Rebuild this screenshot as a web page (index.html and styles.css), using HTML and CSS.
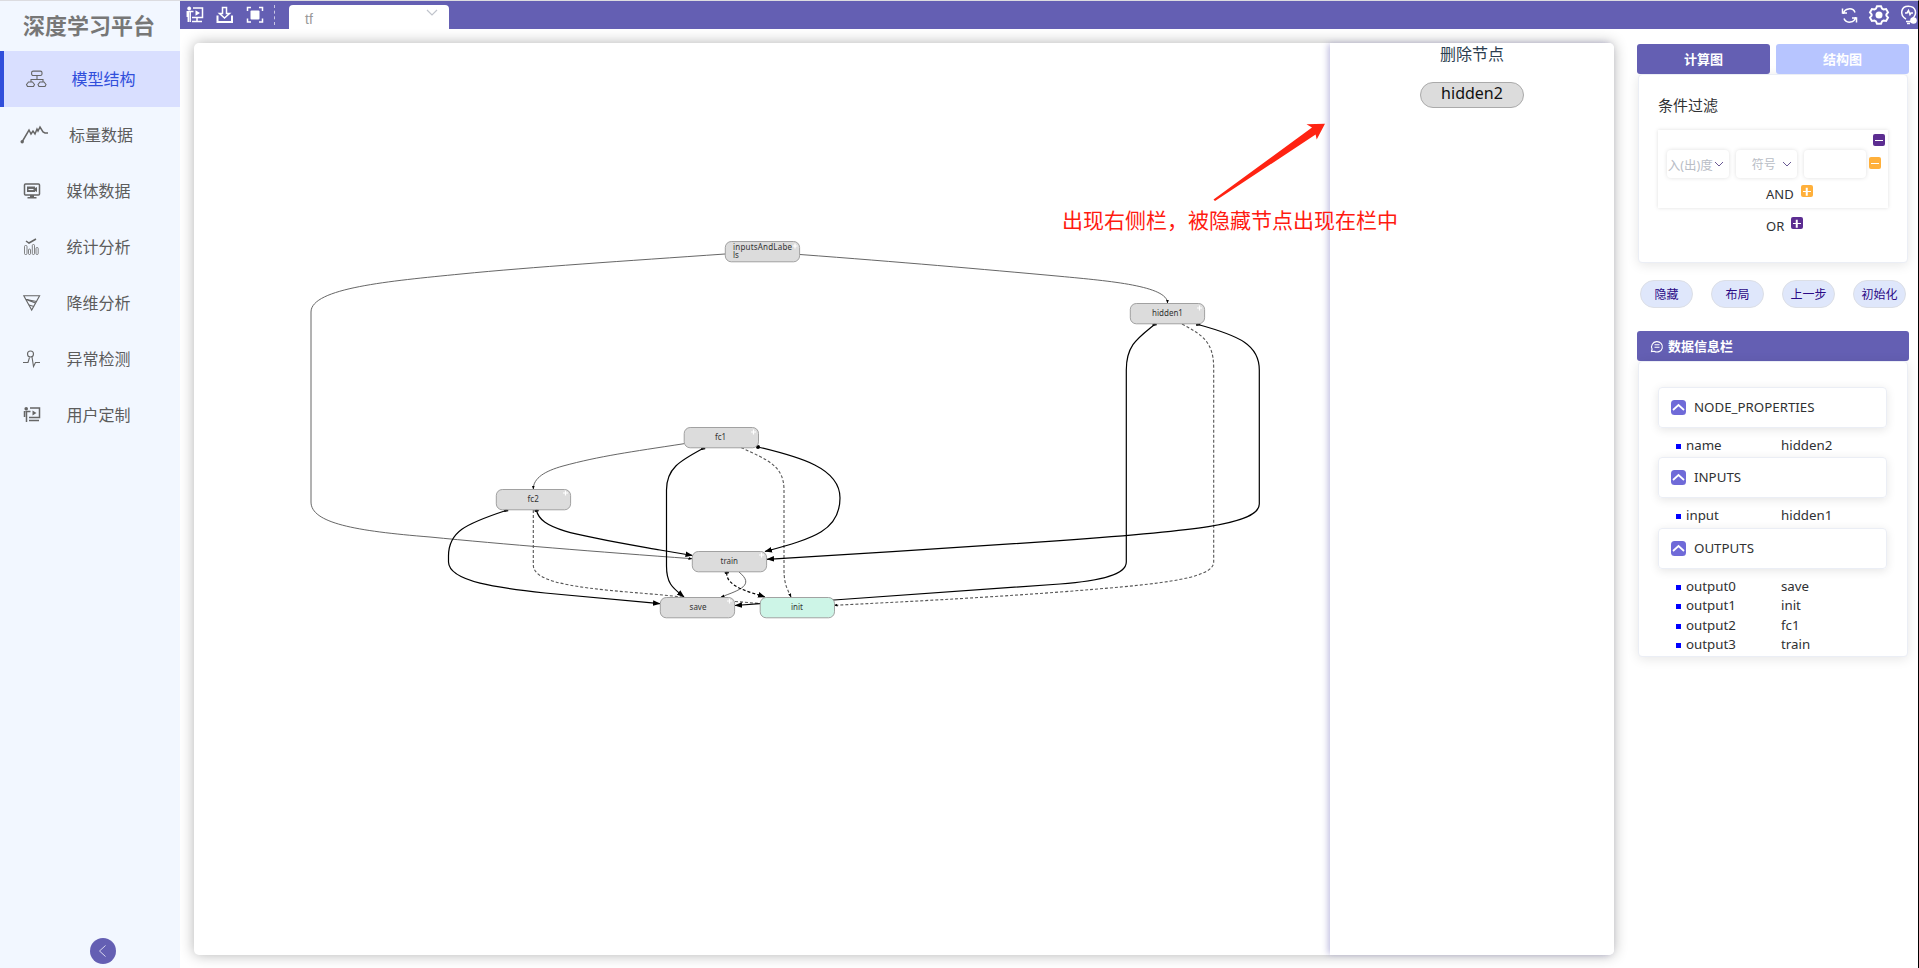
FILE: index.html
```html
<!DOCTYPE html>
<html lang="zh-CN">
<head>
<meta charset="utf-8">
<title>深度学习平台</title>
<link rel="stylesheet" href="styles.css">
</head>
<body>
<div class="app">
  <aside class="sidebar">
    <h1 class="brand">深度学习平台</h1>
    <nav class="menu">
      <a class="item active"><svg class="ico wide" width="22" height="18" viewBox="0 0 22 18"><rect x="5.600" y="1.100" width="10.400" height="4.400" rx="1.600"/><path d="M11 6v3.500M5 12V9.500h12V12"/><path d="M2.500 12h4l2 2.500-1 2h-6l-1-2zM14 12h4l2 2.500-1 2h-6l-1-2z"/></svg><span>模型结构</span></a>
      <a class="item second"><svg class="ico" width="28" height="18" viewBox="0 0 28 18"><path class="bold" d="M2 16L9 4l2 4 2-3 2 3 2-5 1 2 2-4 3 5 2 1h3"/><circle class="fill" cx="2.200" cy="15.700" r="1.700"/></svg><span>标量数据</span></a>
      <a class="item"><svg class="ico" width="18" height="18" viewBox="0 0 18 18"><rect class="bold" x="1.500" y="2" width="15" height="11" rx="1"/><path class="fill" d="M4 4.500h8V6l2-1v5l-2-1v1H4z"/><path class="line-light" d="M5.500 7.500h5"/><path class="fill" d="M7 13h4v2h2.500v1.500h-9V15H7z"/></svg><span>媒体数据</span></a>
      <a class="item"><svg class="ico" width="18" height="18" viewBox="0 0 18 18"><path class="bold" d="M3 3l3 2 7-4"/><g class="bars"><rect x="1.500" y="7.500" width="2.500" height="9" rx="1"/><rect x="5.500" y="11" width="2" height="5.500" rx="1"/><rect x="9.300" y="6.500" width="2.200" height="10" rx="1"/><rect x="13" y="9.500" width="2.200" height="7" rx="1"/></g></svg><span>统计分析</span></a>
      <a class="item"><svg class="ico" width="18" height="18" viewBox="0 0 18 18"><path d="M.8 1.700h15.800L8.700 16z"/><path d="M3.500 5.500l10 2M3 5.500L12.500 9M6 11l5 1.500"/></svg><span>降维分析</span></a>
      <a class="item"><svg class="ico" width="18" height="18" viewBox="0 0 18 18"><circle cx="7.500" cy="4" r="3"/><path d="M0 12.500h5l1.500-5M9 7l1.500 9.500 2-4H17"/></svg><span>异常检测</span></a>
      <a class="item"><svg class="ico" width="18" height="18" viewBox="0 0 18 18"><circle class="fill" cx="3.200" cy="2.800" r="1.800"/><path class="bold" d="M1.500 5v6M3.500 5v11M2.500 5.500h5M7 2h9.500v9.500H6M6 14.500h10"/><path class="fill" d="M9.500 4.500l4 2.500-4 2.500z"/></svg><span>用户定制</span></a>
    </nav>
    <button class="collapse"><svg width="10" height="14" viewBox="0 0 10 14"><path d="M7.500 1.500L1.500 7l6 5.500"/></svg></button>
  </aside>

  <div class="content">
    <header class="topbar">
      <div class="tools">
        <svg width="18" height="18" viewBox="0 0 18 18"><circle class="fill" cx="3.200" cy="2.500" r="1.900"/><path d="M1.300 5v6M2.300 5v11M4.200 5v11M2.500 5.500h5M7 2h9.500v9.500H6M6 15.500h10M11 12v3"/><path class="fill" d="M9.500 4.300l4.500 2.700-4.500 2.700z"/></svg>
        <svg width="18" height="18" viewBox="0 0 18 18"><path d="M6.500 1.500h4v6h3L8.500 12l-5-4.500h3z"/><path class="heavy" d="M1.500 9.500v6.500h14.500V9.500"/></svg>
        <svg width="18" height="18" viewBox="0 0 18 18"><path d="M1.500 5V1.500H5M13 1.500h3.500V5M16.500 12.500V16H13M5 16H1.500v-3.500"/><rect class="fill" x="4.500" y="4.500" width="9" height="9" rx="1"/></svg>
      </div>
      <span class="sep"></span>
      <div class="select-tab"><span>tf</span><svg width="12" height="8" viewBox="0 0 12 8"><path d="M1 1l5 5 5-5"/></svg></div>
      <div class="actions">
        <svg width="17" height="17" viewBox="0 0 17 17"><path d="M2.500 7C3 1 12 0 14 5.500M14.500 10C14 16 5 17 3 11.500M1.500 1.500V6H6M15.500 15.500V11H11"/></svg>
        <svg width="20" height="20" viewBox="0 0 20 20"><path class="heavy" d="M8 1.200h4l1 2.400 1.500.8 2.600-.4 1.900 3.300-1.600 2v1.400l1.600 2-1.900 3.300-2.600-.4-1.500.8-1 2.400H8l-1-2.400-1.500-.8-2.600.4L1 12.700l1.600-2V9.300L1 7.300 2.900 4l2.600.4L7 3.600z"/><circle class="fill" cx="10" cy="10" r="3.500"/></svg>
        <svg width="18" height="20" viewBox="0 0 18 20"><path d="M6 14C-1 10 1 1 8.500 1.200S18 9 12 14M5 8h2l1.500-2.500L10 9.500l1-1.500h2M6 16.500h5M7 18.500h3"/><circle class="fill" cx="13.500" cy="15.500" r="3.300"/></svg>
      </div>
    </header>

    <main class="main">
      <section class="stage">
        <svg class="graph" width="1420" height="912" viewBox="194 43 1420 912">
          <defs>
            <marker id="big" viewBox="0 0 8 6" refX="7.500" refY="3" markerUnits="userSpaceOnUse" markerWidth="7.500" markerHeight="6" orient="auto-start-reverse"><path d="M0 0L8 3 0 6z"/></marker>
            <marker id="mini" viewBox="0 0 8 6" refX="7" refY="3" markerUnits="userSpaceOnUse" markerWidth="4" markerHeight="3.500" orient="auto-start-reverse"><path d="M0 0L8 3 0 6z"/></marker>
            <marker id="foot" viewBox="0 0 6 4" refX="3" refY="2" markerUnits="userSpaceOnUse" markerWidth="5" markerHeight="3"><path d="M0 2L3 0 6 1 6 3 1 4z"/></marker>
          </defs>
          <g class="thin">
            <path d="M725 254C625 261 532 267 461 274C390 281 311 288 311 312V502C311 523 355 531 430 537C500 544 600 552 692 558.700" marker-end="url(#mini)"/>
            <path d="M800 254.500C900 262 980 269 1060 276.300C1110 281 1167.500 286 1167.500 303" marker-end="url(#mini)"/>
            <path d="M684 443.700C630 452 600 456 563 466C545 471 533.300 478 533.300 489" marker-end="url(#mini)"/>
            <path d="M739 572C755 585 740 590 721 597" marker-end="url(#mini)"/>
          </g>
          <g class="thin dashed">
            <path d="M1182 324C1200 334 1213.700 340 1213.700 368V562C1213.700 580 1150 585 1060 592C980 598 900 602 834 605.300" marker-end="url(#mini)"/>
            <path d="M741 447.500C768 460 784 466 784 490V570C784 585 788 590 791 597" marker-end="url(#mini)"/>
            <path d="M533.300 510V565C533.300 585 590 589 660 594.700L682 597"/>
            <path d="M735 601.500L760 603.500"/>
          </g>
          <g class="thick">
            <path d="M1154.500 324.500C1138 338 1126.300 345 1126.300 370V562C1126.300 575 1100 581 1060 584C980 590 900 596 834 600L760 603.700 735 605.500" marker-end="url(#big)" marker-start="url(#foot)"/>
            <path d="M1198 324.500C1240 336 1259.300 345 1259.300 370V504C1259.300 525 1190 531 1060 540.700C950 548 870 553 767 559.300" marker-end="url(#big)" marker-start="url(#foot)"/>
            <path d="M703 448.500C680 461 666.500 468 666.500 490V566C666.500 584 673 588 684 597" marker-end="url(#big)" marker-start="url(#foot)"/>
            <path d="M758 447C800 457 840 468 840 498C840 530 815 538 765 551.500" marker-end="url(#big)"/>
            <path d="M506 510.500C465 524 448.500 532 448.500 556V562C449 582 500 588 545 593L660 603.700" marker-end="url(#big)" marker-start="url(#foot)"/>
            <path d="M536.500 510.500C541 530 575 535 660 550L692.500 555.500" marker-end="url(#big)" marker-start="url(#foot)"/>
            <path class="dashed-thick" d="M726.700 572.500C726 587 750 592 765 597" marker-end="url(#big)" marker-start="url(#foot)"/>
          </g>
          <circle cx="758" cy="447" r="2"/>
          <g class="nodes">
            <rect x="725.300" y="241.500" width="74.300" height="20.300" rx="6"/>
            <rect x="1130.300" y="303.500" width="74.300" height="20.300" rx="6"/>
            <rect x="684.200" y="427.500" width="74.300" height="20.300" rx="6"/>
            <rect x="496.300" y="489.500" width="74.300" height="20.300" rx="6"/>
            <rect x="692.300" y="551.500" width="74.300" height="20.300" rx="6"/>
            <rect x="660.300" y="597.500" width="74.300" height="20.300" rx="6"/>
            <rect class="leaf" x="760.200" y="597.500" width="74.300" height="20.300" rx="6"/>
          </g>
          <path class="plus" d="M776 246"/>
          <path class="plus" d="M792.500 246h5M795 243.500v5M1197 308h5M1199.500 305.500v5M751 432h5M753.500 429.500v5M563 493h5M565.500 490.500v5M759 555h5M761.500 552.500v5M727 601h5M729.500 598.500v5"/>
          <g class="labels">
            <text class="left" x="733" y="250" textLength="59">inputsAndLabe</text>
            <text class="left" x="733" y="258">ls</text>
            <text x="1167.500" y="316">hidden1</text>
            <text x="720.500" y="440">fc1</text>
            <text x="533.200" y="502">fc2</text>
            <text x="729.300" y="564">train</text>
            <text x="698" y="610">save</text>
            <text x="797" y="610">init</text>
          </g>
        </svg>
        <aside class="drawer">
          <h2>删除节点</h2>
          <span class="removed">hidden2</span>
        </aside>
        <svg class="pointer" width="112" height="80" viewBox="1213 122 112 80"><path d="M1213.500 199.500L1312 127.500 1306.500 124.300 1325 123.700 1316.700 139.500 1315.600 134.500 1215 201z"/></svg>
        <p class="note">出现右侧栏，被隐藏节点出现在栏中</p>
      </section>

      <section class="panel">
        <div class="tabs"><button class="tab on">计算图</button><button class="tab">结构图</button></div>
        <div class="card filter">
          <h3>条件过滤</h3>
          <div class="rules">
            <div class="row-top"><i class="sq violet"></i></div>
            <div class="fields">
              <div class="field first"><span>入(出)度</span><svg width="10" height="7" viewBox="0 0 10 7"><path d="M1 1l4 4 4-4"/></svg></div>
              <div class="field mid"><span>符号</span><svg width="10" height="7" viewBox="0 0 10 7"><path d="M1 1l4 4 4-4"/></svg></div>
              <div class="field"></div>
              <i class="sq orange"></i>
            </div>
            <div class="logic and"><span>AND</span><i class="sq orange add"></i></div>
          </div>
          <div class="logic or"><span>OR</span><i class="sq violet add"></i></div>
        </div>
        <div class="buttons"><button>隐藏</button><button>布局</button><button>上一步</button><button>初始化</button></div>
        <div class="info-head"><svg width="14" height="14" viewBox="0 0 14 14"><path d="M1.500 12.500l.6-2.500a5.400 5.200 0 1 1 2 2.200zM4.500 5.700h5M4.500 8.300h5"/></svg><span>数据信息栏</span></div>
        <div class="card info">
          <div class="group"><svg class="chev" width="15" height="15" viewBox="0 0 15 15"><rect width="15" height="15" rx="3.500"/><path d="M2 10l5.500-5L13 10"/></svg><span>NODE_PROPERTIES</span></div>
          <dl><dt>name</dt><dd>hidden2</dd></dl>
          <div class="group"><svg class="chev" width="15" height="15" viewBox="0 0 15 15"><rect width="15" height="15" rx="3.500"/><path d="M2 10l5.500-5L13 10"/></svg><span>INPUTS</span></div>
          <dl><dt>input</dt><dd>hidden1</dd></dl>
          <div class="group"><svg class="chev" width="15" height="15" viewBox="0 0 15 15"><rect width="15" height="15" rx="3.500"/><path d="M2 10l5.500-5L13 10"/></svg><span>OUTPUTS</span></div>
          <dl><dt>output0</dt><dd>save</dd><dt>output1</dt><dd>init</dd><dt>output2</dt><dd>fc1</dd><dt>output3</dt><dd>train</dd></dl>
        </div>
      </section>
    </main>
  </div>
</div>
</body>
</html>
```
FILE: styles.css
```css
* { box-sizing: border-box; }
body { margin: 0; font-family: "Noto Sans", "Noto Sans CJK SC", sans-serif; color: #303133; background: #fff; overflow: hidden; }
button { font-family: inherit; padding: 0; border: 0; }
h1, h2, h3, p, dl, dd { margin: 0; }
svg { display: block; flex: none; fill: none; overflow: visible; }
.app { display: flex; width: 1919px; height: 968px; border-top: 1px solid #dcdce0; border-right: 1px solid #000; }

.sidebar { position: relative; width: 180px; background: #f2f7ff; flex: none; }
.brand { height: 50px; padding-left: 23px; font-size: 22px; line-height: 49px; font-weight: 700; color: #777; white-space: nowrap; }
.item { display: flex; align-items: center; height: 56px; padding-left: 23px; font-size: 16px; color: #5c5c5c; line-height: 24px; }
.item svg { stroke: #666; stroke-width: 1.100; margin-right: 25.500px; }
.item svg .bold { stroke-width: 1.500; }
.item svg .bars { stroke-width: .8; }
.item .fill { fill: #666; stroke: none; }
.item .line-light { stroke: #f2f7ff; }
.item.active { background: #d9dfff; border-left: 4px solid #304edb; padding-left: 22px; color: #304edb; }
.item.active svg { margin-right: 23.500px; }
.item.second { padding-left: 20px; }
.item.second svg { margin-right: 21px; }
.collapse { position: absolute; left: 89.500px; bottom: 4px; width: 26px; height: 26px; border-radius: 50%; background: #645fb3; display: flex; align-items: center; justify-content: center; }
.collapse path { stroke: #d9d8f0; stroke-width: 1; }

.content { flex: 1; min-width: 0; }
.topbar { display: flex; align-items: center; height: 28px; background: #645fb3; }
.tools { display: flex; gap: 12px; padding-left: 6px; }
.topbar .tools svg, .actions svg { stroke: #fff; stroke-width: 1.500; }
.topbar .fill { fill: #fff; stroke: none; }
.topbar .heavy { stroke-width: 2; }
.sep { height: 20px; margin-left: 10px; border-left: 1px dashed #c9c7e4; }
.select-tab { display: flex; justify-content: space-between; align-self: flex-end; width: 160px; height: 24px; margin-left: 14px; padding: 4px 11px 0 16px; background: #fff; border-radius: 4px 4px 0 0; font: 14px/20px "Liberation Sans", sans-serif; color: #999; }
.select-tab svg { stroke: #c0c4cc; stroke-width: 1.200; }
.actions { display: flex; align-items: center; gap: 11px; margin-left: auto; }

.main { display: flex; padding: 14px 9px 0 14px; }
.stage { position: relative; width: 1420px; height: 912px; background: #fff; border-radius: 5px; box-shadow: 0 0 14px rgba(0,0,0,.3); }
.graph .thin { stroke: #555; stroke-width: .9; }
.graph .dashed { stroke: #555; stroke-width: 1.100; stroke-dasharray: 3 2; }
.graph .thick { stroke: #000; stroke-width: 1.200; }
.dashed-thick { stroke-dasharray: 3 2; }
marker path, .graph circle { fill: #000; stroke: none; }
.nodes rect { fill: #dcdcdc; stroke: #999; stroke-width: .9; }
.nodes .leaf { fill: #cdf5e7; }
.plus { stroke: #fff; stroke-width: 1.200; }
.labels { fill: #333; font-size: 8px; text-anchor: middle; }
.labels .left { text-anchor: start; }
.drawer { position: absolute; top: 0; right: 0; width: 284px; height: 100%; background: #fff; border-radius: 0 5px 5px 0; box-shadow: -3px 0 6px -1px rgba(100,95,179,.4); display: flex; flex-direction: column; align-items: center; }
.drawer h2 { font-size: 16px; font-weight: 400; line-height: 22px; color: #2c3e50; }
.removed { width: 104px; height: 26px; margin-top: 17px; border: 1px solid #aaa; border-radius: 13px; background: #dcdcdc; text-align: center; font-size: 16px; line-height: 20px; color: #111; }
.pointer { position: absolute; left: 1019px; top: 79px; fill: #ff2312; }
.note { position: absolute; left: 868px; top: 161px; font-size: 21px; line-height: 32px; color: #ff1a10; white-space: nowrap; }

.panel { width: 272px; margin: 1px 0 0 23px; }
.tabs { display: flex; gap: 6px; }
.tab { width: 133px; height: 30px; padding-bottom: 2px; border-radius: 3px; background: #b7c5ff; color: #fff; font-size: 13px; font-weight: 700; }
.tab.on { background: #645fb3; }
.card { border: 1px solid #ebeef5; border-radius: 4px; background: #fff; box-shadow: 0 2px 12px rgba(0,0,0,.1); }
.filter { height: 189px; margin: 0 1px; padding: 18px 19px 0; }
.filter h3 { font-size: 15px; font-weight: 400; line-height: 24px; }
.rules { height: 78px; margin-top: 13px; padding: 4px 0 0 9px; box-shadow: 0 0 4px rgba(0,0,0,.13); }
.row-top { display: flex; justify-content: flex-end; padding-right: 3px; }
.fields { display: flex; gap: 7px; margin-top: 4px; }
.field { display: flex; align-items: center; justify-content: center; width: 61.500px; height: 28px; border-radius: 4px; box-shadow: 0 0 4px rgba(0,0,0,.13); font-size: 12px; color: #b9bdc6; white-space: nowrap; }
.field.first { gap: 1px; padding-right: 4px; font-size: 12.500px; }
.field.mid { gap: 6px; padding-left: 11px; }
.field svg { stroke: #6a5a95; stroke-width: 1; }
.sq { position: relative; width: 12px; height: 12px; border-radius: 2px; flex: none; background: #5c2d91; }
.sq.orange { background: #ffb03b; }
.fields .sq { margin: 7px 0 0 -4px; }
.sq::before, .sq.add::after { content: ""; position: absolute; left: 2px; right: 2px; top: 5.500px; height: 1.500px; background: #fff; }
.sq.add::after { transform: rotate(90deg); }
.logic { display: flex; align-items: flex-start; font-size: 13px; line-height: 18px; }
.logic.and { gap: 7px; margin-top: 7px; padding-left: 99px; }
.logic.or { gap: 7px; margin-top: 9px; padding-left: 108px; }
.buttons { display: flex; gap: 18px; margin: 17px 0 0 3px; }
.buttons button { width: 53px; height: 28px; padding-bottom: 1px; border: 1px solid #dcdfe6; border-radius: 14px; background: #dfe7fb; color: #2b0a86; font-size: 12px; }
.info-head { display: flex; align-items: center; gap: 4px; height: 30px; margin-top: 23px; padding-left: 13px; border-radius: 3px; background: #645fb3; color: #fff; font-size: 13px; font-weight: 700; }
.info-head span { padding-bottom: 2px; }
.info-head svg { stroke: #fff; stroke-width: 1.100; }
.info { height: 296px; margin: 0 1px; padding: 25px 20px 0 19px; }
.group { display: flex; align-items: center; gap: 8px; height: 41px; padding-left: 12px; border: 1px solid #ebeef5; border-radius: 4px; box-shadow: 0 2px 10px rgba(0,0,0,.1); font-size: 13.300px; }
.group span { padding-bottom: 1px; }
.chev rect { fill: #6f6ad8; }
.chev path { stroke: #fff; stroke-width: 1.700; }
.info dl { display: grid; grid-template-columns: 95px 1fr; grid-auto-rows: 19.400px; padding: 8px 0 2px 28px; font-size: 13.300px; line-height: 19px; }
.info dt { position: relative; }
.info dt::before { content: ""; position: absolute; left: -10px; top: 8px; width: 5px; height: 5px; background: #00f; }
```
